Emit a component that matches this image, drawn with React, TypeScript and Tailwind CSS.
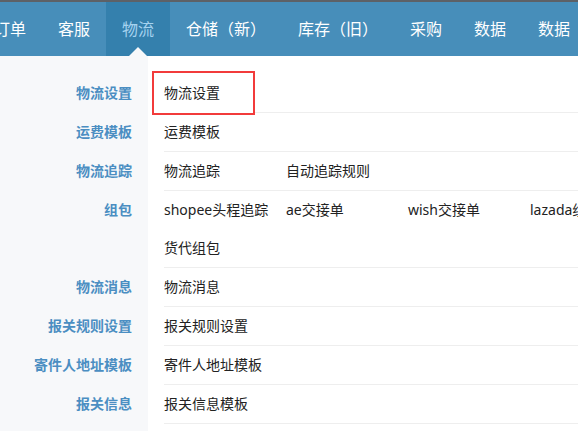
import React from "react"

const navItems = ["订单", "客服", "物流", "仓储（新）", "库存（旧）", "采购", "数据", "数据"]

const rows: { label: string; items: string[] }[] = [
  { label: "物流设置", items: ["物流设置"] },
  { label: "运费模板", items: ["运费模板"] },
  { label: "物流追踪", items: ["物流追踪", "自动追踪规则"] },
  { label: "组包", items: ["shopee头程追踪", "ae交接单", "wish交接单", "lazada组包", "货代组包"] },
  { label: "物流消息", items: ["物流消息"] },
  { label: "报关规则设置", items: ["报关规则设置"] },
  { label: "寄件人地址模板", items: ["寄件人地址模板"] },
  { label: "报关信息", items: ["报关信息模板"] },
]

export default function App() {
  return (
    <div className="w-[578px] h-[431px] overflow-hidden bg-white flex flex-col font-['Noto_Sans','Noto_Sans_CJK_SC',sans-serif]">
      {/* Top nav */}
      <header className="h-[56px] shrink-0 border-t-2 border-[#5d6167] bg-[#478eba] flex">
        <nav className="flex h-full -ml-[22px]">
          {navItems.map((item, i) => {
            const active = item === "物流"
            return (
              <div
                key={i}
                className={`relative h-full px-4 flex items-center whitespace-nowrap text-[16px] ${
                  active ? "bg-[#3480ad] text-[#a6d3f0]" : "text-white"
                }`}
              >
                {item}
                {active && (
                  <span className="absolute bottom-0 left-1/2 -translate-x-1/2 w-0 h-0 border-x-[9px] border-x-transparent border-b-[9px] border-b-[#f7f8fa]" />
                )}
              </div>
            )
          })}
        </nav>
      </header>

      {/* Settings menu */}
      <div className="flex-1 w-[724px] pt-[18px] bg-[linear-gradient(to_right,#f7f8fa_148px,#ffffff_148px)]">
        {rows.map((row, r) => (
          <div key={r} className="grid grid-cols-[148px_576px]">
            <div className="pr-4 text-right text-[14px] leading-[38px] font-bold text-[#4b8ec2] whitespace-nowrap">
              {row.label}
            </div>
            <div className="ml-4 flex flex-wrap border-b border-[#eeeeee]">
              {row.items.map((item, i) => (
                <div key={i} className="relative w-[122px] h-[38px] leading-[38px] text-[14px] text-[#222] whitespace-nowrap">
                  {r === 0 && i === 0 && (
                    <div className="absolute -left-[12px] -top-[3px] w-[103px] h-[44px] border-2 border-[#f23b3b] bg-white" />
                  )}
                  <span className="relative">{item}</span>
                </div>
              ))}
            </div>
          </div>
        ))}
      </div>
    </div>
  )
}
